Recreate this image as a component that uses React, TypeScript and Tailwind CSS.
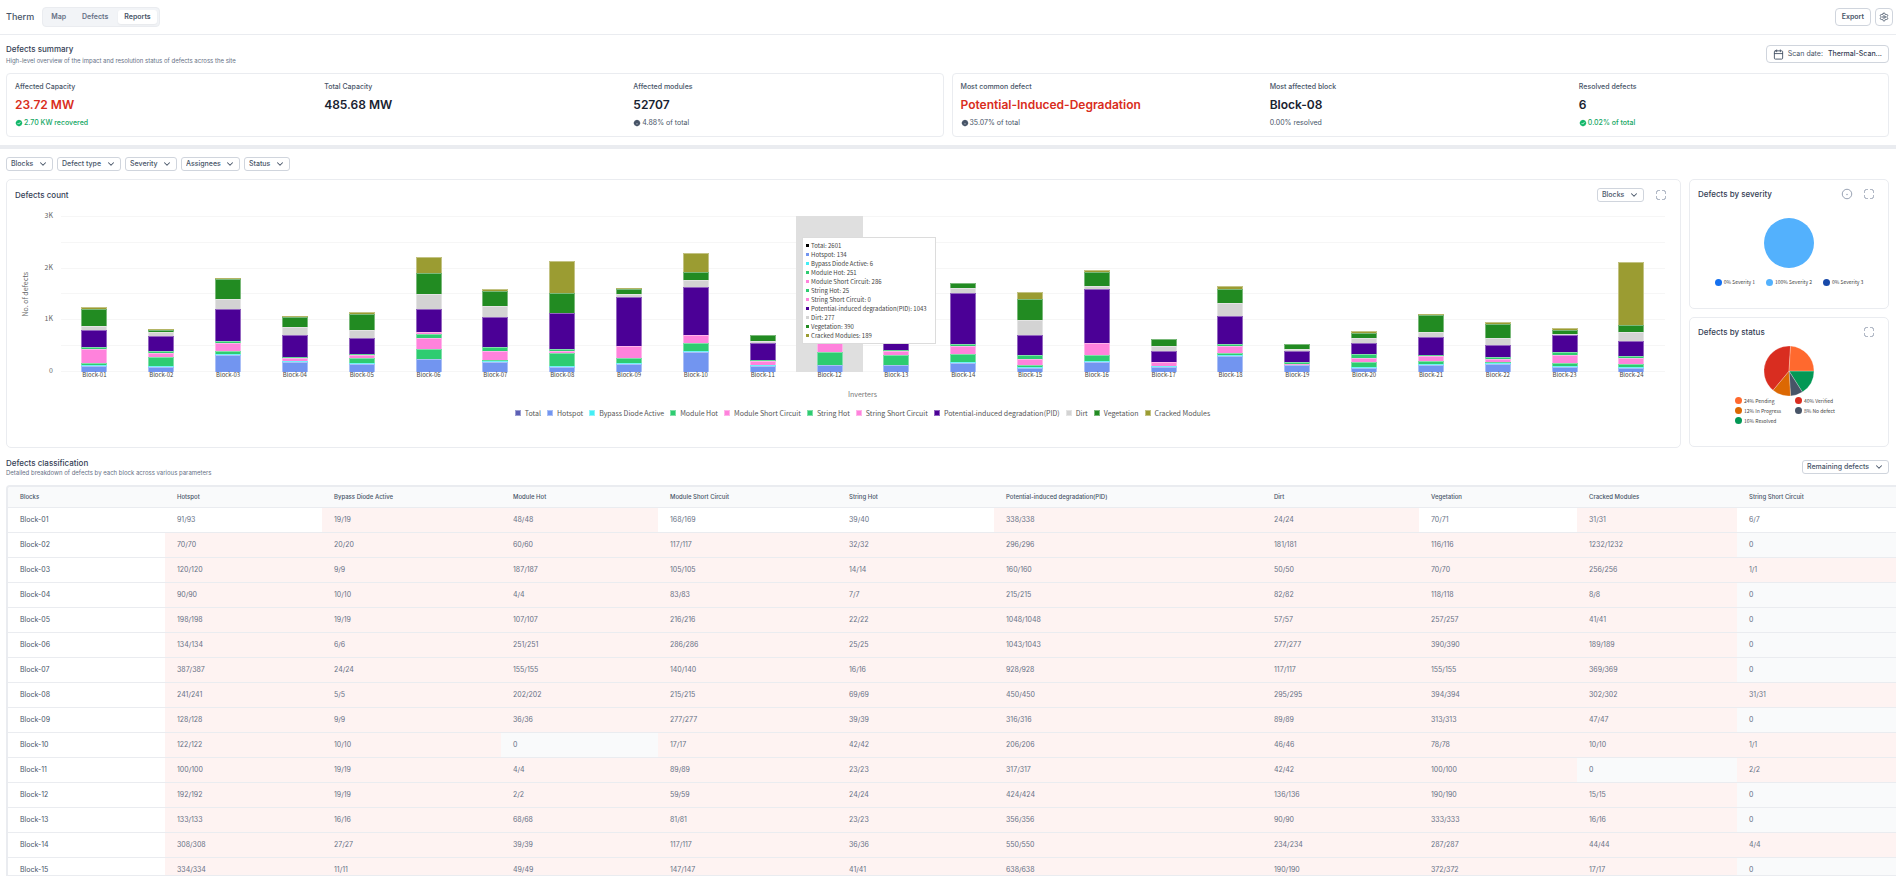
import React from "react";
import { Calendar, ChevronDown, Settings } from "lucide-react";

/* ---------- data ---------- */

const SERIES = [
  { name: "Hotspot", color: "#7295f0" },
  { name: "Bypass Diode Active", color: "#43eef5" },
  { name: "Module Hot", color: "#2ecc71" },
  { name: "Module Short Circuit", color: "#ff82dc" },
  { name: "String Hot", color: "#2ecc71" },
  { name: "String Short Circuit", color: "#ff82dc" },
  { name: "Potential-induced degradation(PID)", color: "#4b0096" },
  { name: "Dirt", color: "#d3d3d3" },
  { name: "Vegetation", color: "#228b22" },
  { name: "Cracked Modules", color: "#9b9c32" },
];

const TOOLTIP_VALUES = [134, 6, 251, 286, 25, 0, 1043, 277, 390, 189];

const PLOT_HEIGHT = 156;

// Segment heights per block, bottom to top, in the order of SERIES.
const BARS: number[][] = [
  [6, 1, 2, 14, 2, 0, 17, 4, 17, 2],
  [5, 1, 9, 4, 2, 0, 15, 4, 2, 1],
  [17, 1, 3, 8, 2, 0, 32, 10, 20, 1],
  [10, 1, 0, 3, 1, 0, 22, 8, 10, 1],
  [8, 1, 5, 3, 1, 0, 16, 8, 16, 2],
  [13, 0, 10, 11, 4, 2, 23, 15, 21, 16],
  [10, 1, 1, 9, 4, 0, 30, 11, 15, 2],
  [5, 1, 13, 2, 2, 0, 36, 0, 20, 32],
  [8, 1, 5, 12, 0, 0, 49, 3, 5, 1],
  [20, 1, 8, 8, 0, 0, 48, 7, 8, 19],
  [6, 1, 0, 4, 1, 0, 17, 2, 6, 0],
  [7, 0, 13, 15, 1, 0, 54, 14, 20, 10],
  [7, 0, 10, 4, 1, 0, 20, 6, 5, 2],
  [9, 1, 8, 8, 2, 0, 51, 5, 5, 0],
  [4, 1, 2, 6, 4, 0, 20, 15, 21, 7],
  [10, 1, 6, 12, 0, 0, 54, 3, 14, 2],
  [5, 1, 0, 4, 0, 0, 11, 5, 7, 0],
  [16, 1, 2, 7, 2, 0, 28, 13, 14, 3],
  [7, 0, 0, 1, 2, 0, 11, 2, 5, 0],
  [4, 1, 5, 4, 4, 0, 11, 5, 5, 2],
  [7, 1, 3, 5, 1, 0, 18, 5, 17, 1],
  [8, 1, 1, 3, 2, 0, 12, 7, 14, 2],
  [5, 1, 3, 8, 3, 0, 17, 1, 4, 2],
  [4, 1, 3, 6, 2, 0, 15, 9, 7, 63],
];

const ACTIVE_BLOCK = 11;

const COLUMNS = [
  { title: "Blocks", width: "w-[157px]" },
  { title: "Hotspot", width: "w-[157px]" },
  { title: "Bypass Diode Active", width: "w-[179px]" },
  { title: "Module Hot", width: "w-[157px]" },
  { title: "Module Short Circuit", width: "w-[179px]" },
  { title: "String Hot", width: "w-[157px]" },
  { title: "Potential-induced degradation(PID)", width: "w-[268px]" },
  { title: "Dirt", width: "w-[157px]" },
  { title: "Vegetation", width: "w-[158px]" },
  { title: "Cracked Modules", width: "w-[160px]" },
  { title: "String Short Circuit", width: "w-[159px]" },
];

const ROWS = [
  "91/93 19/19 48/48 168/169 39/40 338/338 24/24 70/71 31/31 6/7",
  "70/70 20/20 60/60 117/117 32/32 296/296 181/181 116/116 1232/1232 0",
  "120/120 9/9 187/187 105/105 14/14 160/160 50/50 70/70 256/256 1/1",
  "90/90 10/10 4/4 83/83 7/7 215/215 82/82 118/118 8/8 0",
  "198/198 19/19 107/107 216/216 22/22 1048/1048 57/57 257/257 41/41 0",
  "134/134 6/6 251/251 286/286 25/25 1043/1043 277/277 390/390 189/189 0",
  "387/387 24/24 155/155 140/140 16/16 928/928 117/117 155/155 369/369 0",
  "241/241 5/5 202/202 215/215 69/69 450/450 295/295 394/394 302/302 31/31",
  "128/128 9/9 36/36 277/277 39/39 316/316 89/89 313/313 47/47 0",
  "122/122 10/10 0 17/17 42/42 206/206 46/46 78/78 10/10 1/1",
  "100/100 19/19 4/4 89/89 23/23 317/317 42/42 100/100 0 2/2",
  "192/192 19/19 2/2 59/59 24/24 424/424 136/136 190/190 15/15 0",
  "133/133 16/16 68/68 81/81 23/23 356/356 90/90 333/333 16/16 0",
  "308/308 27/27 39/39 117/117 36/36 550/550 234/234 287/287 44/44 4/4",
  "334/334 11/11 49/49 147/147 41/41 638/638 190/190 372/372 17/17 0",
].map((r) => r.split(" "));

const STATUS = [
  { label: "16% Resolved", share: 16, color: "#039855" },
  { label: "8% No defect", share: 8, color: "#475467" },
  { label: "12% In Progress", share: 12, color: "#dc6803" },
  { label: "40% Verified", share: 40, color: "#d92d20" },
  { label: "24% Pending", share: 24, color: "#ff692e" },
];

const blockName = (i: number) => `Block-${String(i + 1).padStart(2, "0")}`;

/* ---------- small parts ---------- */

function Dropdown({ label }: { label: string }) {
  return (
    <span className="inline-grid h-[14px] items-center rounded-[3px] border border-[#d0d5dd] bg-white text-[#475467]">
      <select
        aria-label={label}
        className="col-start-1 row-start-1 h-full appearance-none bg-transparent pr-[18px] pl-1 text-[7px] leading-[10px] font-medium outline-none"
      >
        <option>{label}</option>
      </select>
      <ChevronDown
        size={10}
        strokeWidth={2.5}
        className="pointer-events-none col-start-1 row-start-1 mr-1 justify-self-end"
        aria-hidden
      />
    </span>
  );
}

function BadgeIcon({ kind }: { kind: "check" | "note" }) {
  return (
    <svg viewBox="0 0 24 24" className="size-2" aria-hidden>
      <path
        d="M3.85 8.62a4 4 0 0 1 4.78-4.77 4 4 0 0 1 6.74 0 4 4 0 0 1 4.78 4.78 4 4 0 0 1 0 6.74 4 4 0 0 1-4.77 4.78 4 4 0 0 1-6.75 0 4 4 0 0 1-4.78-4.77 4 4 0 0 1 0-6.76Z"
        fill={kind === "check" ? "#12b76a" : "#475467"}
      />
      {kind === "check" ? (
        <path d="m8 12.500 2.800 2.800 5.400-5.600" fill="none" stroke="#fff" strokeWidth="2.400" />
      ) : (
        <path d="M9.500 14.500h5" fill="none" stroke="#c5cbd5" strokeWidth="2" />
      )}
    </svg>
  );
}

function ExpandButton({ label }: { label: string }) {
  return (
    <button type="button" aria-label={label} className="text-[#98a2b3]">
      <svg
        viewBox="0 0 24 24"
        className="size-3"
        fill="none"
        stroke="currentColor"
        strokeWidth="2"
        aria-hidden
      >
        <path d="M9.500 3H7a4 4 0 0 0-4 4v2.500M14.500 3H17a4 4 0 0 1 4 4v2.500M9.500 21H7a4 4 0 0 1-4-4v-2.500M14.500 21H17a4 4 0 0 0 4-4v-2.500" />
      </svg>
    </button>
  );
}

type StatProps = {
  label: string;
  value: string;
  note?: string;
  danger?: boolean;
  good?: boolean;
  icon?: "check" | "note";
};

function Stat({ label, value, note, danger, good, icon }: StatProps) {
  return (
    <div className="flex flex-col gap-1">
      <div className="text-[7px] leading-[10px] font-medium text-[#475467]">{label}</div>
      <div
        className={
          danger
            ? "text-[12px] leading-[18px] font-semibold text-[#d92d20]"
            : "text-[12px] leading-[18px] font-semibold text-[#182230]"
        }
      >
        {value}
      </div>
      {note && (
        <div
          className={
            good
              ? "flex items-center gap-px text-[7px] leading-[10px] font-medium text-[#12a663]"
              : "flex items-center gap-px text-[7px] leading-[10px] text-[#475467]"
          }
        >
          {icon && <BadgeIcon kind={icon} />}
          {note}
        </div>
      )}
    </div>
  );
}

function StatCard({ children }: { children: React.ReactNode }) {
  return (
    <div className="grid grid-cols-3 gap-2 rounded-[4px] border border-[#eaecf0] p-2">
      {children}
    </div>
  );
}

function SectionTitle({ children }: { children: React.ReactNode }) {
  return <h2 className="text-[8px] leading-[12px] font-medium text-[#344054]">{children}</h2>;
}

/* ---------- chart ---------- */

function Bar({ segments }: { segments: number[] }) {
  const total = segments.reduce((a, b) => a + b, 0);
  let top = total;
  return (
    <svg width="26" height={total} viewBox={`0 0 26 ${total}`} className="block shrink-0" aria-hidden>
      {segments.map((h, i) => {
        if (h === 0) return null;
        top -= h;
        return (
          <g key={SERIES[i].name}>
            <rect x="0" y={top} width="26" height={h} fill={SERIES[i].color} />
            <path
              d={`M.5 ${top + h}V${top + 0.5}H25.5V${top + h}`}
              fill="none"
              stroke="#fff"
              strokeOpacity={h > 1 ? 0.4 : 0.25}
            />
          </g>
        );
      })}
    </svg>
  );
}

function Tooltip() {
  const rows = [
    { name: "Total", color: "#000000", value: 2601 },
    ...SERIES.map((s, i) => ({ ...s, value: TOOLTIP_VALUES[i] })),
  ];
  return (
    <div
      role="tooltip"
      className="absolute top-[21px] left-1.5 z-10 border border-[#dcdcdc] bg-white py-[3px] pr-2 pl-[3px] text-[6px] leading-[9px] whitespace-nowrap text-[#444]"
    >
      {rows.map((r) => (
        <div key={r.name} className="flex items-center gap-0.5">
          <span className="size-[3px]" style={{ backgroundColor: r.color }} />
          {r.name}: {r.value}
        </div>
      ))}
    </div>
  );
}

function DefectsChart() {
  return (
    <section className="flex min-h-[269px] flex-col rounded-[5px] border border-[#eaecf0] font-['Noto_Sans_CJK_SC',sans-serif]">
      <div className="flex items-center justify-between px-2 pt-2 pr-[13px] font-[Inter,sans-serif]">
        <SectionTitle>Defects count</SectionTitle>
        <div className="flex items-center gap-[11px]">
          <Dropdown label="Blocks" />
          <ExpandButton label="Expand defects count" />
        </div>
      </div>

      <div className="mt-[14px] flex pr-[15px] pl-[14px] text-[7px] text-[#666]">
        <div className="flex h-[156px] w-2 items-center justify-center">
          <span className="-rotate-90 whitespace-nowrap">No. of defects</span>
        </div>
        <div className="-mt-[5px] flex h-[163px] w-[24px] flex-col justify-between text-right leading-[8px]">
          <span>3K</span>
          <span>2K</span>
          <span>1K</span>
          <span>0</span>
        </div>
        <div className="ml-2 grid min-w-0 flex-1">
          <div className="col-start-1 row-start-1 flex h-[156px] flex-col justify-between" aria-hidden>
            {[0, 1, 2, 3, 4, 5, 6].map((n) => (
              <div key={n} className="h-px bg-[#f6f6f6]" />
            ))}
          </div>
          <div className="col-start-1 row-start-1 flex">
            {BARS.map((segments, i) => (
              <div key={i} className="relative flex min-w-0 flex-1 flex-col items-center">
                <div
                  className={
                    i === ACTIVE_BLOCK
                      ? "flex w-full items-end justify-center bg-[#dfdfdf]"
                      : "flex w-full items-end justify-center"
                  }
                  style={{ height: PLOT_HEIGHT }}
                >
                  <Bar segments={segments} />
                </div>
                <span className="text-[6px] leading-[6px] whitespace-nowrap text-[#444]">
                  {blockName(i)}
                </span>
                {i === ACTIVE_BLOCK && <Tooltip />}
              </div>
            ))}
          </div>
        </div>
      </div>

      <div className="mt-3 pr-[15px] pl-[53px] text-center text-[7px] leading-[8px] text-[#777]">
        Inverters
      </div>
      <ul className="mt-[11px] flex flex-wrap justify-center gap-x-1.5 pr-[15px] pl-[53px] text-[7px] leading-[8px] text-[#555]">
        {[{ name: "Total", color: "#5c5fb4" }, ...SERIES].map((s) => (
          <li key={s.name} className="flex items-center gap-1">
            <span
              className="size-1.5 border border-white/40"
              style={{ backgroundColor: s.color }}
            />
            {s.name}
          </li>
        ))}
      </ul>
    </section>
  );
}

function LegendDot({ color, label }: { color: string; label: string }) {
  return (
    <li className="flex items-center gap-0.5 whitespace-nowrap">
      <span className="size-[7px] rounded-full" style={{ backgroundColor: color }} />
      {label}
    </li>
  );
}

function SeverityCard() {
  return (
    <section className="flex h-[130px] flex-col rounded-[5px] border border-[#eaecf0]">
      <div className="flex items-center justify-between pt-2 pr-[13px] pl-2">
        <SectionTitle>Defects by severity</SectionTitle>
        <div className="flex items-center gap-[10px]">
          <button type="button" aria-label="About severity" className="text-[#98a2b3]">
            <svg viewBox="0 0 24 24" className="size-3" aria-hidden>
              <circle cx="12" cy="12" r="9.500" fill="none" stroke="currentColor" strokeWidth="2" />
              <circle cx="12" cy="13" r="1.500" fill="currentColor" />
            </svg>
          </button>
          <ExpandButton label="Expand defects by severity" />
        </div>
      </div>
      <svg viewBox="0 0 50 50" className="mx-auto mt-[18px] size-[50px]" role="img" aria-label="Severity">
        <circle cx="25" cy="25" r="25" fill="#53b1fd" />
      </svg>
      <ul className="mt-[10px] flex justify-center gap-[11px] font-['Noto_Sans_CJK_SC',sans-serif] text-[5px] leading-[8px] text-[#444]">
        <LegendDot color="#1570ef" label="0% Severity 1" />
        <LegendDot color="#53b1fd" label="100% Severity 2" />
        <LegendDot color="#1849a9" label="0% Severity 3" />
      </ul>
    </section>
  );
}

function StatusCard() {
  let angle = 0;
  const point = (deg: number) => {
    const rad = (deg * Math.PI) / 180;
    return `${(25 + 25 * Math.cos(rad)).toFixed(2)} ${(25 + 25 * Math.sin(rad)).toFixed(2)}`;
  };
  return (
    <section className="flex h-[130px] flex-col rounded-[5px] border border-[#eaecf0]">
      <div className="flex items-center justify-between pt-2 pr-[13px] pl-2">
        <SectionTitle>Defects by status</SectionTitle>
        <ExpandButton label="Expand defects by status" />
      </div>
      <svg viewBox="0 0 50 50" className="mx-auto mt-2 size-[50px]" role="img" aria-label="Status">
        {STATUS.map((s) => {
          const from = angle;
          angle += s.share * 3.6;
          return (
            <path
              key={s.label}
              d={`M25 25L${point(from)}A25 25 0 0 1 ${point(angle)}Z`}
              fill={s.color}
              stroke="#fff"
              strokeOpacity="0.5"
              strokeWidth="0.5"
            />
          );
        })}
      </svg>
      <ul className="mx-auto grid grid-cols-[60px_48px] gap-y-px font-['Noto_Sans_CJK_SC',sans-serif] text-[5px] leading-[9px] text-[#444]">
        <LegendDot color="#ff692e" label="24% Pending" />
        <LegendDot color="#d92d20" label="40% Verified" />
        <LegendDot color="#dc6803" label="12% In Progress" />
        <LegendDot color="#475467" label="8% No defect" />
        <LegendDot color="#039855" label="16% Resolved" />
      </ul>
    </section>
  );
}

/* ---------- table ---------- */

function cellClass(value: string) {
  const base = "h-[25px] border-b border-[#eaecf0] px-3";
  if (value === "0") return `${base} bg-[#f9fafb]`;
  const [left, total] = value.split("/");
  return left === total ? `${base} bg-[#fef3f2]` : base;
}

function ClassificationTable() {
  return (
    <div className="min-h-0 flex-1 overflow-auto rounded-tl-[4px] border-t-2 border-b border-l-2 border-[#eaecf0] [scrollbar-width:none]">
      <table className="w-full table-fixed border-separate border-spacing-0 text-left text-[7px] leading-[10px] text-[#667085]">
        <thead>
          <tr>
            {COLUMNS.map((c) => (
              <th
                key={c.title}
                scope="col"
                className={`${c.width} h-[21px] border-b border-[#eaecf0] bg-[#f9fafb] px-3 text-[6px] font-medium whitespace-nowrap text-[#475467]`}
              >
                {c.title}
              </th>
            ))}
          </tr>
        </thead>
        <tbody>
          {ROWS.map((row, i) => (
            <tr key={i}>
              <th
                scope="row"
                className="h-[25px] border-b border-[#eaecf0] px-3 font-normal text-[#475467]"
              >
                {blockName(i)}
              </th>
              {row.map((v, j) => (
                <td key={j} className={cellClass(v)}>
                  {v}
                </td>
              ))}
            </tr>
          ))}
        </tbody>
      </table>
    </div>
  );
}

/* ---------- page ---------- */

export default function App() {
  return (
    <div className="flex h-screen flex-col overflow-hidden bg-white font-[Inter,sans-serif] text-[#344054]">
      <header className="flex h-[35px] shrink-0 items-center justify-between border-b border-[#eaecf0] pr-[3px] pl-1.5">
        <div className="flex items-center gap-2">
          <h1 className="text-[9px] leading-[14px] font-medium text-[#475467]">Therm</h1>
          <nav className="flex gap-1 rounded-[4px] border border-[#eaecf0] bg-[#f2f4f7] p-0.5 text-[7px] leading-[14px] font-semibold text-[#667085]">
            <a href="#map" className="px-1.5">
              Map
            </a>
            <a href="#defects" className="px-1.5">
              Defects
            </a>
            <a
              href="#reports"
              aria-current="page"
              className="rounded-[3px] bg-white px-1.5 text-[#475467] shadow-xs"
            >
              Reports
            </a>
          </nav>
        </div>
        <div className="flex items-center gap-1">
          <button
            type="button"
            className="h-[18px] rounded-[4px] border border-[#d0d5dd] px-1.5 text-[7px] leading-[10px] font-semibold text-[#475467]"
          >
            Export
          </button>
          <button
            type="button"
            aria-label="Settings"
            className="flex size-[18px] items-center justify-center rounded-[4px] border border-[#d0d5dd] text-[#475467]"
          >
            <Settings size={10} strokeWidth={2} aria-hidden />
          </button>
        </div>
      </header>

      <section className="shrink-0 pt-2 pr-[7px] pb-2 pl-1.5">
        <div className="flex items-center justify-between">
          <div className="flex flex-col gap-0.5">
            <SectionTitle>Defects summary</SectionTitle>
            <p className="text-[6px] leading-[8px] text-[#667085]">
              High-level overview of the impact and resolution status of defects across the site
            </p>
          </div>
          <button
            type="button"
            className="flex h-[18px] items-center gap-1 rounded-[4px] border border-[#d0d5dd] px-1.5 text-[7px] leading-[10px] text-[#475467]"
          >
            <Calendar size={11} strokeWidth={2} aria-hidden />
            <span>Scan date:</span>
            <span className="ml-px font-medium text-[#344054]">Thermal-Scan...</span>
          </button>
        </div>
        <div className="mt-2 grid grid-cols-2 gap-2">
          <StatCard>
            <Stat label="Affected Capacity" value="23.72 MW" note="2.70 KW recovered" danger good icon="check" />
            <Stat label="Total Capacity" value="485.68 MW" />
            <Stat label="Affected modules" value="52707" note="4.88% of total" icon="note" />
          </StatCard>
          <StatCard>
            <Stat
              label="Most common defect"
              value="Potential-Induced-Degradation"
              note="35.07% of total"
              danger
              icon="note"
            />
            <Stat label="Most affected block" value="Block-08" note="0.00% resolved" />
            <Stat label="Resolved defects" value="6" note="0.02% of total" good icon="check" />
          </StatCard>
        </div>
      </section>

      <div className="h-1 shrink-0 bg-[#eaecf0]" />

      <main className="flex min-h-0 flex-1 flex-col pt-2 pl-1.5">
        <div className="flex shrink-0 gap-1">
          <Dropdown label="Blocks" />
          <Dropdown label="Defect type" />
          <Dropdown label="Severity" />
          <Dropdown label="Assignees" />
          <Dropdown label="Status" />
        </div>

        <div className="mt-2 grid shrink-0 grid-cols-[minmax(0,1fr)_200px] gap-2 pr-[7px]">
          <DefectsChart />
          <div className="flex flex-col gap-2">
            <SeverityCard />
            <StatusCard />
          </div>
        </div>

        <div className="mt-[9px] mb-2 flex shrink-0 items-center justify-between pr-[7px]">
          <div>
            <SectionTitle>Defects classification</SectionTitle>
            <p className="text-[6px] leading-[8px] text-[#667085]">
              Detailed breakdown of defects by each block across various parameters
            </p>
          </div>
          <Dropdown label="Remaining defects" />
        </div>

        <ClassificationTable />
      </main>
    </div>
  );
}
